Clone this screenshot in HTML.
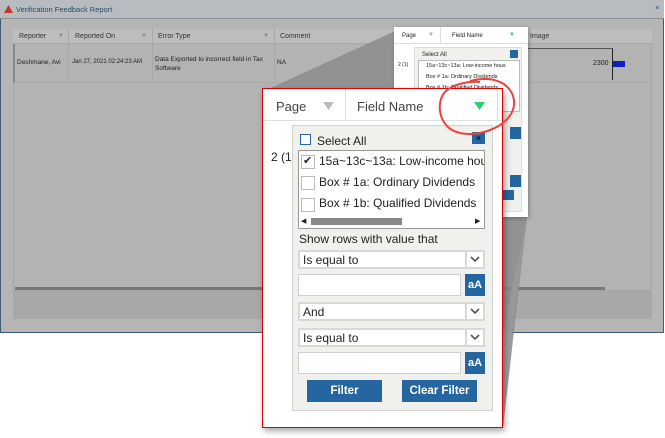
<!DOCTYPE html>
<html><head><meta charset="utf-8"><style>
*{box-sizing:border-box;margin:0;padding:0}
body{width:665px;height:438px;background:#fff;position:relative;overflow:hidden;font-family:"Liberation Sans",sans-serif;color:#222}
.a{position:absolute}
.win{left:0;top:0;width:664px;height:333px;background:#b5b5b5;border:1px solid #3d5a7a;border-top:none}
.title{left:0;top:0;width:664px;height:19px;background:#b8bcc0;border-bottom:1px solid #8a9096;font-size:7.5px;color:#2b4a6d;padding:5px 0 0 16px}
.grid{left:13px;top:29px;width:639px;height:262px;background:#b3b3b3;border:1px solid #a5a5a5}
.hdr{left:13px;top:29px;width:639px;height:15px;background:#bdbdbd;border-bottom:1px solid #a8a8a8;font-size:7px;color:#333}
.hdr span,.row span{position:absolute;top:4px;white-space:nowrap}
.row{left:13px;top:44px;width:639px;height:39px;border-bottom:1px solid #a8a8a8;font-size:6.5px;color:#222}
.vl{position:absolute;top:0;width:1px;height:100%;background:#a8a8a8}
.foot{left:13px;top:291px;width:639px;height:28px;background:#a8a8a8}
.big{left:262px;top:88px;width:241px;height:340px;background:#fff;border:1px solid #e00000;box-shadow:2px 3px 6px rgba(0,0,0,.35)}
.panel{left:292px;top:125px;width:201px;height:286px;background:#f0f0ec;border:1px solid #d2d2d2}
.t{font-size:12px;color:#222;position:absolute;white-space:nowrap}
.sel{position:absolute;height:19px;background:#fff;border:2px solid #d8d8d8}
.sel b{position:absolute;right:0;top:0;width:18px;height:15px;border-left:2px solid #d8d8d8;background:#fff}
.inp{position:absolute;height:22px;background:#fff;border:1px solid #d0d0d0}
.aa{position:absolute;width:20px;height:22px;background:#2566a0;color:#fff;font-weight:bold;font-size:11px;text-align:center;line-height:22px}
.btn{position:absolute;height:22px;background:#2566a0;color:#fff;font-weight:bold;font-size:11.5px;text-align:center;line-height:22px}
.cb{position:absolute;width:14px;height:14px;border:1px solid #bbb;background:#fff}
</style></head><body>
<div class="a win"></div>
<div class="a title"><svg class="a" style="left:4px;top:5px" width="9" height="8"><polygon points="4.5,0 9,8 0,8" fill="#c0392b"/></svg>Verification Feedback Report<span class="a" style="left:655px;top:3px;color:#2b4a6d">×</span></div>
<div class="a grid"></div>
<div class="a hdr">
<span style="left:6px">Reporter</span><span style="left:45px;color:#888;font-size:6px">▼</span><div class="vl" style="left:55px"></div>
<span style="left:62px">Reported On</span><span style="left:128px;color:#888;font-size:6px">▼</span><div class="vl" style="left:139px"></div>
<span style="left:145px">Error Type</span><span style="left:250px;color:#888;font-size:6px">▼</span><div class="vl" style="left:261px"></div>
<span style="left:267px">Comment</span>
</div>
<div class="a row">
<div class="a" style="left:0;top:0;width:2px;height:39px;background:#888"></div>
<span style="left:4px;top:15px">Deshmane, Avi</span><div class="vl" style="left:55px"></div>
<span style="left:59px;top:15px;font-size:6px">Jan 27, 2021 02:24:23 AM</span><div class="vl" style="left:139px"></div>
<span style="left:142px;top:11px;line-height:9px">Data Exported to incorrect field in Tax<br>Software</span><div class="vl" style="left:261px"></div>
<span style="left:264px;top:15px">NA</span>
</div>
<div class="a" style="left:15px;top:287px;width:590px;height:3px;background:#777"></div>
<div class="a foot"></div>
<svg class="a" style="left:0;top:0" width="665" height="438"><polygon points="395,31 262,92 262,428 503,428 527,217 527,31" fill="#8c8c8c" opacity=".85"/><polygon points="503,333 527,217 512,333" fill="#999"/></svg>
<!-- small popup -->
<div class="a" style="left:394px;top:27px;width:134px;height:190px;background:#fff;box-shadow:1px 1px 4px rgba(0,0,0,.3);font-size:6px">
<span class="a" style="left:8px;top:6px">Page</span><span class="a" style="left:34px;top:5px;color:#aaa">▼</span>
<div class="a" style="left:46px;top:0;width:1px;height:16px;background:#ddd"></div>
<span class="a" style="left:58px;top:6px">Field Name</span><span class="a" style="left:115px;top:5px;color:#2ecc71">▼</span>
<div class="a" style="left:0;top:16px;width:134px;height:1px;background:#ddd"></div>
<span class="a" style="left:4px;top:35px;font-size:5px">2 (1)</span>
<div class="a" style="left:20px;top:20px;width:108px;height:165px;background:#f0f0ec;border:1px solid #ddd"></div>
<span class="a" style="left:28px;top:25px">Select All</span>
<div class="a" style="left:24px;top:33px;width:102px;height:52px;background:#fff;border:1px solid #bbb"></div>
<span class="a" style="left:32px;top:36px;font-size:5.5px">15a~13c~13a: Low-income hous</span>
<span class="a" style="left:32px;top:47px;font-size:5.5px">Box # 1a: Ordinary Dividends</span>
<span class="a" style="left:32px;top:58px;font-size:5.5px">Box # 1b: Qualified Dividends</span>
<div class="a" style="left:116px;top:23px;width:8px;height:8px;background:#2566a0"></div>
<div class="a" style="left:116px;top:100px;width:11px;height:12px;background:#2566a0"></div>
<div class="a" style="left:116px;top:148px;width:11px;height:12px;background:#2566a0"></div>
<div class="a" style="left:108px;top:163px;width:12px;height:10px;background:#2566a0"></div>
</div>
<!-- right partial columns of bg -->
<span class="a" style="left:530px;top:33px;font-size:7px;color:#333">Image</span>
<div class="a" style="left:612px;top:48px;width:1px;height:32px;background:#222"></div>
<div class="a" style="left:528px;top:48px;width:85px;height:1px;background:#555"></div>
<span class="a" style="left:593px;top:60px;font-size:7px">2300</span>
<div class="a" style="left:613px;top:61px;width:12px;height:6px;background:#1020c0"></div>
<!-- big popup -->
<div class="a big"></div>
<span class="t" style="left:276px;top:99px;color:#444;font-size:13px">Page</span><svg class="a" style="left:323px;top:102px" width="11" height="8"><polygon points="0,0 11,0 5.5,8" fill="#b8bcc4"/></svg>
<div class="a" style="left:345px;top:89px;width:1px;height:32px;background:#ddd"></div>
<span class="t" style="left:357px;top:99px;color:#444;font-size:13px">Field Name</span><svg class="a" style="left:474px;top:102px" width="11" height="8"><polygon points="0,0 11,0 5.5,8" fill="#2ecc71"/></svg>
<div class="a" style="left:497px;top:89px;width:1px;height:32px;background:#ddd"></div>
<div class="a" style="left:263px;top:120px;width:239px;height:1px;background:#ddd"></div>
<span class="t" style="left:271px;top:150px">2 (1)</span>
<div class="a panel"></div>
<div class="cb" style="left:300px;top:134px;width:11px;height:11px;border:1px solid #2566a0"></div>
<span class="t" style="left:317px;top:134px">Select All</span>
<div class="a" style="left:472px;top:132px;width:13px;height:12px;background:#2566a0;color:#000;font-size:9px;text-align:center;line-height:12px">×</div>
<div class="a" style="left:298px;top:150px;width:187px;height:79px;background:#fff;border:1px solid #999;overflow:hidden">
<div class="cb" style="left:2px;top:4px"></div><span class="a" style="left:4px;top:3px;font-size:11px">✔</span>
<span class="t" style="left:20px;top:3px">15a~13c~13a: Low-income hous</span>
<div class="cb" style="left:2px;top:25px"></div><span class="t" style="left:20px;top:24px">Box # 1a: Ordinary Dividends</span>
<div class="cb" style="left:2px;top:47px"></div><span class="t" style="left:20px;top:45px">Box # 1b: Qualified Dividends</span>
<div class="a" style="left:12px;top:67px;width:91px;height:7px;background:#888"></div>
<span class="a" style="left:2px;top:66px;font-size:7px">◀</span><span class="a" style="left:176px;top:66px;font-size:7px">▶</span>
</div>
<span class="t" style="left:299px;top:232px">Show rows with value that</span>
<div class="sel" style="left:298px;top:250px;width:187px"><span class="t" style="left:3px;top:1px">Is equal to</span><b><svg class="a" style="left:3px;top:4px" width="10" height="7"><path d="M1,1 L5,5 L9,1" fill="none" stroke="#555" stroke-width="1.6"/></svg></b></div>
<div class="inp" style="left:298px;top:274px;width:163px"></div><div class="aa" style="left:465px;top:274px">aA</div>
<div class="sel" style="left:298px;top:302px;width:187px"><span class="t" style="left:3px;top:1px">And</span><b><svg class="a" style="left:3px;top:4px" width="10" height="7"><path d="M1,1 L5,5 L9,1" fill="none" stroke="#555" stroke-width="1.6"/></svg></b></div>
<div class="sel" style="left:298px;top:328px;width:187px"><span class="t" style="left:3px;top:1px">Is equal to</span><b><svg class="a" style="left:3px;top:4px" width="10" height="7"><path d="M1,1 L5,5 L9,1" fill="none" stroke="#555" stroke-width="1.6"/></svg></b></div>
<div class="inp" style="left:298px;top:352px;width:163px"></div><div class="aa" style="left:465px;top:352px">aA</div>
<div class="btn" style="left:307px;top:380px;width:75px">Filter</div>
<div class="btn" style="left:402px;top:380px;width:75px">Clear Filter</div>
<svg class="a" style="left:0;top:0" width="665" height="438"><path d="M470,81 C505,72 520,95 512,112 C504,130 470,140 452,130 C438,122 436,100 446,91 C454,84 468,81 480,82" fill="none" stroke="#ee4040" stroke-width="2"/></svg>
</body></html>
